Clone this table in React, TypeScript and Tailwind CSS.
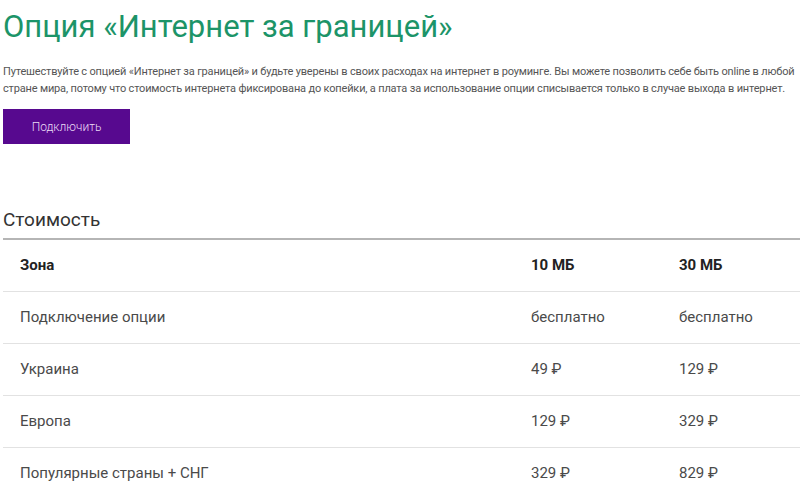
const rows = [
  { zone: "Подключение опции", a: "бесплатно", b: "бесплатно" },
  { zone: "Украина", a: "49 ₽", b: "129 ₽" },
  { zone: "Европа", a: "129 ₽", b: "329 ₽" },
  { zone: "Популярные страны + СНГ", a: "329 ₽", b: "829 ₽" },
];

export default function App() {
  return (
    <div className="h-[498px] w-[800px] overflow-hidden bg-white pl-[3px] font-['Roboto',sans-serif]">
      <h1 className="pt-[9px] text-[31px] leading-[36px] text-[#1c9468]">
        Опция «Интернет за границей»
      </h1>

      <p className="mt-[18px] text-[11px] leading-[17px] tracking-[-0.17px] text-[#555]">
        Путешествуйте с опцией «Интернет за границей» и будьте уверены в своих расходах на интернет в роуминге. Вы можете
        позволить себе быть online в любой
        <br />
        стране мира, потому что стоимость интернета фиксирована до копейки, а плата за использование опции списывается
        только в случае выхода в интернет.
      </p>

      <button className="mt-[12px] h-[35px] w-[127px] bg-[#57098f] text-[12px] font-light text-[#eadcf5]">
        Подключить
      </button>

      <h2 className="mt-[64px] text-[19px] leading-[24px] text-[#333]">Стоимость</h2>

      <div className="mt-[6px] border-t-2 border-[#b5b5b5]">
        <div className="grid h-[52px] grid-cols-[528px_148px_1fr] items-center border-b border-[#e2e2e2] text-[15px] font-bold text-[#222]">
          <div className="pl-[17px]">Зона</div>
          <div>10 МБ</div>
          <div>30 МБ</div>
        </div>
        {rows.map((r) => (
          <div
            key={r.zone}
            className="grid h-[52px] grid-cols-[528px_148px_1fr] items-center border-b border-[#e2e2e2] text-[15px] text-[#4a4a4a]"
          >
            <div className="pl-[17px]">{r.zone}</div>
            <div>{r.a}</div>
            <div>{r.b}</div>
          </div>
        ))}
      </div>
    </div>
  );
}
